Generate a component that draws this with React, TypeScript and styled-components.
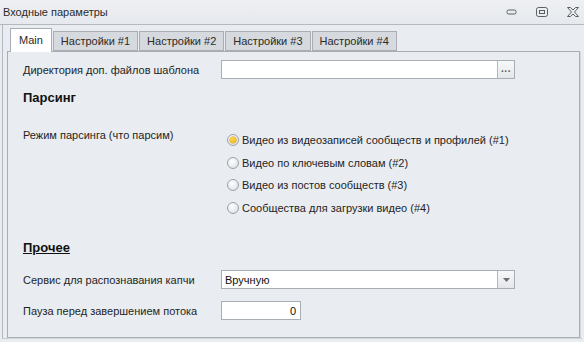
import React, { useState } from 'react';
import styled, { createGlobalStyle } from 'styled-components';

const GlobalStyle = createGlobalStyle`
  html, body {
    margin: 0;
    padding: 0;
    background: #e9ecf0;
  }
  body {
    font-family: 'Liberation Sans', Arial, sans-serif;
    font-size: 11px;
    color: #1f1f1f;
  }
`;

// окно
const Window = styled.div`
  width: 584px;
  height: 342px;
  display: flex;
  flex-direction: column;
  background: #e9ecf0;
  overflow: hidden;
`;

const TitleBar = styled.div`
  height: 25px;
  display: flex;
  align-items: center;
  justify-content: space-between;
  padding: 0 5px 0 3px;
  border-bottom: 1px solid #b4b9bf;
  background: linear-gradient(#eef0f3, #e6e9ed);
  box-sizing: border-box;
`;

const Title = styled.span`
  font-size: 11px;
  color: #2b2b2b;
  line-height: 14px;
  margin-top: -1px;
`;

const Controls = styled.div`
  display: flex;
  align-items: center;
  gap: 19px;
`;

const CtrlButton = styled.span`
  display: flex;
  width: 12px;
  height: 10px;
  align-items: center;
  justify-content: center;
`;

const Body = styled.div`
  flex: 1;
  display: flex;
  padding: 0 2px 3px 2px;
`;

const Frame = styled.div`
  flex: 1;
  display: flex;
  flex-direction: column;
  border-left: 1px solid #b4b9bf;
  border-bottom: 1px solid #c6cacf;
  padding: 3px 0 0 4px;
`;

const TabStrip = styled.div`
  display: flex;
  align-items: flex-end;
  gap: 1px;
  height: 23px;
  margin-left: 3px;
  position: relative;
  z-index: 1;
`;

const Tab = styled.div<{ $active?: boolean }>`
  box-sizing: border-box;
  height: ${(p) => (p.$active ? '24px' : '20px')};
  margin-bottom: ${(p) => (p.$active ? '-1px' : '0')};
  padding: ${(p) => (p.$active ? '0 8px 2px' : '0 7px')};
  display: flex;
  align-items: center;
  border: 1px solid #a9aeb4;
  border-bottom: ${(p) => (p.$active ? 'none' : '1px solid #a9aeb4')};
  background: ${(p) => (p.$active ? '#ffffff' : '#d6dade')};
  font-size: 11px;
  color: #2a2a2a;
  white-space: nowrap;
`;

const Page = styled.div`
  flex: 1;
  margin-right: 2px;
  border: 1px solid #a9aeb4;
  background: #e9ecf0;
  padding: 8px 0 0 15px;
  display: flex;
  flex-direction: column;
  box-shadow: 1px 1px 0 #d3d6da;
`;

const Row = styled.div<{ $mt?: number }>`
  display: flex;
  align-items: center;
  height: 19px;
  margin-top: ${(p) => p.$mt ?? 0}px;
`;

const Label = styled.div`
  width: 198px;
  flex: none;
  font-size: 11px;
  line-height: 14px;
  white-space: nowrap;
`;

const Heading = styled.div<{ $mt: number; $underline?: boolean }>`
  margin-top: ${(p) => p.$mt}px;
  font-size: 13px;
  font-weight: 700;
  line-height: 16px;
  color: #111;
  text-decoration: ${(p) => (p.$underline ? 'underline' : 'none')};
`;

const Input = styled.div<{ $w: number; $align?: string }>`
  box-sizing: border-box;
  width: ${(p) => p.$w}px;
  height: 19px;
  background: #fff;
  border: 1px solid #a9aeb4;
  display: flex;
  align-items: center;
  justify-content: ${(p) => p.$align ?? 'flex-start'};
  padding: 0 4px;
  font-size: 11px;
  color: #111;
`;

const Combo = styled.div<{ $w: number }>`
  box-sizing: border-box;
  width: ${(p) => p.$w}px;
  height: 19px;
  display: flex;
  border: 1px solid #a9aeb4;
  background: #fff;
`;

const ComboText = styled.div`
  flex: 1;
  display: flex;
  align-items: center;
  padding: 0 3px;
  font-size: 11px;
  color: #111;
`;

const SideButton = styled.div`
  width: 16px;
  flex: none;
  border-left: 1px solid #b3b8be;
  background: linear-gradient(#f7f8f9, #e4e7ea);
  display: flex;
  align-items: center;
  justify-content: center;
  color: #555a60;
`;

const Dots = styled.span`
  font-size: 10px;
  font-weight: 700;
  letter-spacing: 0.5px;
  line-height: 10px;
  margin-top: -2px;
`;

const RadioSection = styled.div`
  display: flex;
  margin-top: 22px;
`;

const RadioLabel = styled(Label)`
  width: 204px;
`;

const RadioGroup = styled.div`
  display: flex;
  flex-direction: column;
  padding-top: 1px;
`;

const RadioRow = styled.label`
  height: 22.6px;
  display: flex;
  align-items: center;
  gap: 3px;
  font-size: 11px;
  cursor: default;
`;

const RadioCircle = styled.span<{ $checked: boolean }>`
  box-sizing: border-box;
  width: 12px;
  height: 12px;
  border-radius: 50%;
  border: 1px solid #9da2a8;
  background: radial-gradient(circle at 40% 35%, #ffffff 0%, #e9ecef 55%, #d2d6db 100%);
  display: flex;
  align-items: center;
  justify-content: center;

  &::after {
    content: '';
    display: ${(p) => (p.$checked ? 'block' : 'none')};
    width: 6px;
    height: 6px;
    border-radius: 50%;
    background: radial-gradient(circle at 40% 35%, #ffd84a, #f2a900);
    box-shadow: 0 0 0 0.5px #d89400;
  }
`;

const options = [
  'Видео из видеозаписей сообществ и профилей (#1)',
  'Видео по ключевым словам (#2)',
  'Видео из постов сообществ (#3)',
  'Сообщества для загрузки видео (#4)',
];

const tabs = ['Main', 'Настройки #1', 'Настройки #2', 'Настройки #3', 'Настройки #4'];

const App: React.FC = () => {
  const [mode, setMode] = useState(0);

  return (
    <Window>
      <GlobalStyle />
      <TitleBar>
        <Title>Входные параметры</Title>
        <Controls>
          <CtrlButton>
            <svg width="11" height="6" viewBox="0 0 11 6">
              <rect x="1" y="1" width="9" height="4" rx="1.5" fill="none" stroke="#5a5f66" strokeWidth="1" />
            </svg>
          </CtrlButton>
          <CtrlButton>
            <svg width="12" height="10" viewBox="0 0 12 10">
              <rect x="0.5" y="0.5" width="11" height="9" rx="2" fill="none" stroke="#5a5f66" strokeWidth="1" />
              <rect x="3.5" y="3.5" width="5" height="3" fill="none" stroke="#5a5f66" strokeWidth="1" />
            </svg>
          </CtrlButton>
          <CtrlButton>
            <svg width="12" height="10" viewBox="0 0 12 10">
              <path
                d="M0.5 0.5 H3.5 L6 3 L8.5 0.5 H11.5 L7.5 5 L11.5 9.5 H8.5 L6 7 L3.5 9.5 H0.5 L4.5 5 Z"
                fill="none"
                stroke="#5a5f66"
                strokeWidth="1"
                strokeLinejoin="round"
              />
            </svg>
          </CtrlButton>
        </Controls>
      </TitleBar>

      <Body>
        <Frame>
          <TabStrip>
            {tabs.map((t, i) => (
              <Tab key={t} $active={i === 0}>
                {t}
              </Tab>
            ))}
          </TabStrip>

          <Page>
            <Row>
              <Label>Директория доп. файлов шаблона</Label>
              <Combo $w={294}>
                <ComboText />
                <SideButton>
                  <Dots>...</Dots>
                </SideButton>
              </Combo>
            </Row>

            <Heading $mt={11}>Парсинг</Heading>

            <RadioSection>
              <RadioLabel>Режим парсинга (что парсим)</RadioLabel>
              <RadioGroup>
                {options.map((o, i) => (
                  <RadioRow key={o} onClick={() => setMode(i)}>
                    <RadioCircle $checked={mode === i} />
                    {o}
                  </RadioRow>
                ))}
              </RadioGroup>
            </RadioSection>

            <Heading $mt={21} $underline>
              Прочее
            </Heading>

            <Row $mt={14}>
              <Label>Сервис для распознавания капчи</Label>
              <Combo $w={294}>
                <ComboText>Вручную</ComboText>
                <SideButton>
                  <svg width="7" height="4" viewBox="0 0 7 4">
                    <path d="M0 0 H7 L3.5 4 Z" fill="#6a6f75" />
                  </svg>
                </SideButton>
              </Combo>
            </Row>

            <Row $mt={12}>
              <Label>Пауза перед завершением потока</Label>
              <Input $w={80} $align="flex-end">
                0
              </Input>
            </Row>
          </Page>
        </Frame>
      </Body>
    </Window>
  );
};

export default App;
